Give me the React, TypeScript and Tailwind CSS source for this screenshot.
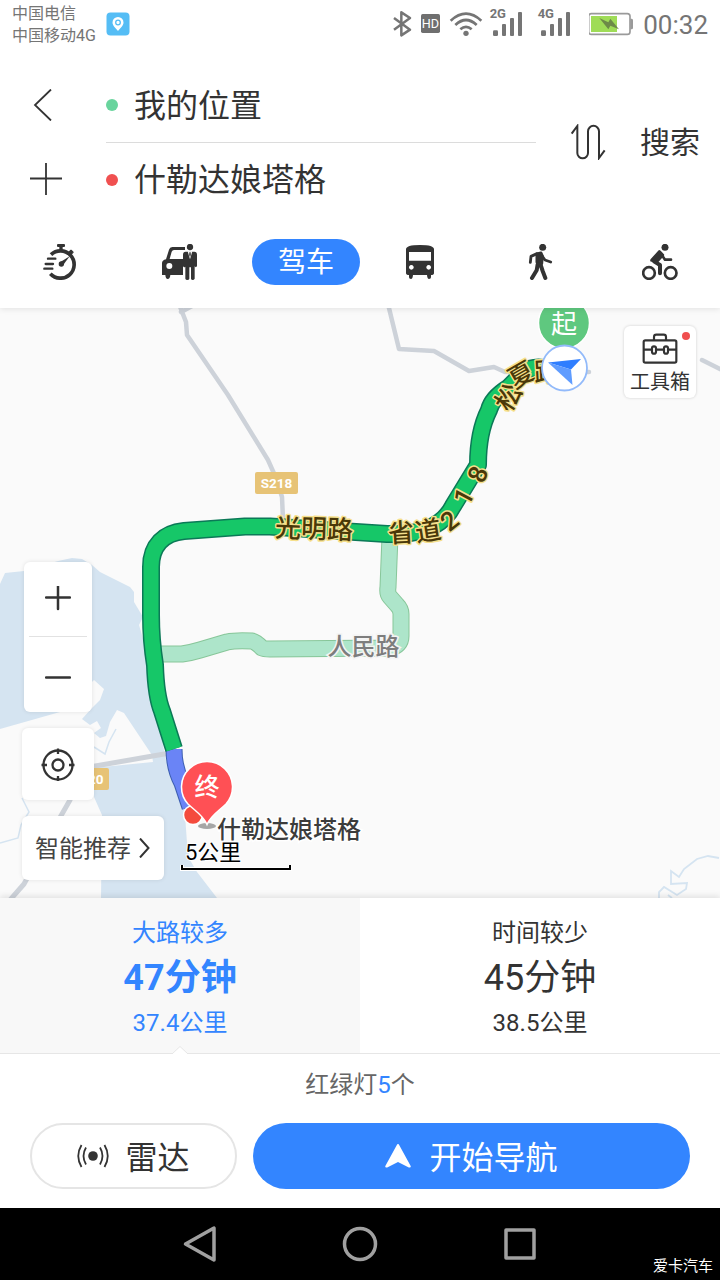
import { useState } from "react";
import type { ReactNode } from "react";

function StatusBar() {
  return (
    <div className="flex h-12 items-center justify-between px-3 text-[#757575]">
      <div className="flex items-center gap-[10px]">
        <div className="pt-0.5 text-[16px] leading-[22px]">
          <p>中国电信</p>
          <p>中国移动4G</p>
        </div>
        <svg className="size-6" viewBox="0 0 24 24" aria-hidden="true">
          <rect x="0.5" y="0.5" width="23" height="23" rx="4" fill="#55bdf5" />
          <path d="M12 5a5.5 5.5 0 0 0-5.5 5.5c0 3.400 3.500 5.500 5.500 8.500 2-3 5.500-5.100 5.500-8.500A5.500 5.500 0 0 0 12 5z" fill="#fff" />
          <circle cx="12" cy="10.500" r="2.300" fill="#fff" stroke="#55bdf5" strokeWidth="1.300" />
        </svg>
      </div>
      <div className="flex items-center gap-2">
        <svg className="h-[30px] w-5" viewBox="98 27 60 90" fill="none" stroke="#757575" strokeWidth="7.500" aria-hidden="true">
          <path d="M101 54L149 89L123 106V37L149 54L101 89" strokeLinejoin="round" />
        </svg>
        <svg className="h-[30px] w-5" viewBox="183 27 60 90" aria-hidden="true">
          <rect x="183" y="42" width="57" height="57" rx="5" fill="#6f6f6f" />
          <text x="211.500" y="83" textAnchor="middle" fontSize="38" fill="#fff">HD</text>
        </svg>
        <svg className="h-[30px] w-[34px]" viewBox="267 27 102 90" fill="none" stroke="#757575" strokeWidth="8" aria-hidden="true">
          <path d="M272 62Q318 20 364 62M286 75Q318 45 350 75M301 88Q318 73 335 88" />
          <circle cx="318" cy="100" r="8" fill="#757575" stroke="none" />
        </svg>
        <Signal label="2G" className="mr-2 h-8 w-8" />
        <Signal label="4G" className="mr-[10px] h-8 w-8" />
        <svg className="h-6 w-[46px]" viewBox="687 36 138 72" aria-hidden="true">
          <rect x="686" y="41" width="124" height="62" rx="8" fill="#fff" stroke="#9a9a9a" strokeWidth="5" />
          <path d="M811 56h4q4 0 4 5v22q0 5-4 5h-4z" fill="#9a9a9a" />
          <rect x="693" y="48" width="78" height="48" fill="#9fdc57" />
          <path d="M718 54L745 67L751 56L777 88L751 77L745 88z" fill="#6d8a48" />
        </svg>
        <time className="pt-0.5 text-[26px] leading-8">00:32</time>
      </div>
    </div>
  );
}

function Signal({ label, className }: { label: string; className: string }) {
  return (
    <svg className={className} viewBox="393 24 96 96" fill="#757575" overflow="visible" aria-hidden="true">
      <text x="389" y="53" fontSize="39" fontWeight="700">{label}</text>
      <rect x="399" y="91" width="15" height="17" rx="4" />
      <rect x="426" y="72" width="12" height="36" rx="3" />
      <rect x="450" y="54" width="12" height="54" rx="3" />
      <rect x="474" y="36" width="12" height="72" rx="3" />
    </svg>
  );
}

function SearchPanel() {
  return (
    <div className="flex pt-5">
      <div className="flex w-[106px] shrink-0 flex-col text-[#333]">
        <button type="button" aria-label="返回" className="flex h-[74px] items-center pl-[30px]">
          <svg className="size-8" viewBox="0 0 32 32" fill="none" stroke="currentColor" strokeWidth="1.800">
            <path d="M21 0.500L5 16L21 31.500" />
          </svg>
        </button>
        <button type="button" aria-label="添加途经点" className="flex h-[74px] items-center pl-[30px]">
          <svg className="size-8" viewBox="0 0 32 32" fill="none" stroke="currentColor" strokeWidth="1.800">
            <path d="M16 0V32M0 15.500H32" />
          </svg>
        </button>
      </div>
      <div className="min-w-0 flex-1 text-[#333]">
        <label className="flex h-[75px] items-center gap-4 border-b border-[#dcdcdc]">
          <span className="size-3 shrink-0 rounded-full bg-[#69d49d]" />
          <input aria-label="起点" defaultValue="我的位置" className="w-full min-w-0 bg-transparent pt-0.5 text-[32px] leading-[48px] outline-none" />
        </label>
        <label className="flex h-[73px] items-center gap-4">
          <span className="size-3 shrink-0 rounded-full bg-[#f05050]" />
          <input aria-label="终点" defaultValue="什勒达娘塔格" className="w-full min-w-0 bg-transparent text-[32px] leading-[48px] outline-none" />
        </label>
      </div>
      <div className="flex w-[184px] shrink-0 items-center justify-between pl-[34px] pr-5 text-[#333]">
        <button type="button" aria-label="交换起终点">
          <svg className="size-9" viewBox="630 372 108 108" fill="none" stroke="currentColor" strokeWidth="6">
            <path d="M635 401L652 378V459A15 15 0 0 0 684 459V394A16 16 0 0 1 717 394V474L734 451" />
          </svg>
        </button>
        <button type="button" className="pt-0.5 text-[30px] leading-[44px]">搜索</button>
      </div>
    </div>
  );
}

const icons: Record<string, ReactNode> = {
  打车: (
    <svg className="size-9" viewBox="126 57 108 108" fill="#333" aria-hidden="true">
      <rect x="171" y="57" width="24" height="9" rx="3" />
      <rect x="178" y="62" width="10" height="14" />
      <path d="M151 88A41 41 0 1 1 149 145" transform="translate(2 1)" fill="none" stroke="#333" strokeWidth="11" />
      <path d="M207 82L213 76L219 82L213 88z" stroke="#333" strokeWidth="4" strokeLinejoin="round" />
      <path d="M144 101H166M137 117H159M133 131H157" stroke="#333" strokeWidth="7" strokeLinecap="round" />
      <path d="M180 112L209 94L189 121z" />
      <circle cx="184" cy="117" r="8" />
    </svg>
  ),
  代驾: (
    <svg className="size-9" viewBox="486 57 108 108" fill="#333" aria-hidden="true">
      <path d="M498 103L507 74Q509 66 517 66H555V75H522Q517 75 515 80L509 102H549V150H511Q510 162 503 162Q497 162 496 150H486V114Q486 106 498 103z" />
      <circle cx="508" cy="123" r="9" fill="#fff" />
      <circle cx="570" cy="66" r="9.500" />
      <path d="M557 80H583Q591 80 591 89V124Q587 129 584 124V161Q582 165 578 165Q574 165 573 161V127H568V161Q567 165 562 165Q557 165 556 161V125Q553 129 549 124V89Q549 80 557 80z" />
      <path d="M563 79L570 103L577 79z" fill="#fff" />
      <path d="M568 82H572L572.500 90L570 96L567.500 90z" />
    </svg>
  ),
  公交: (
    <svg className="size-9" viewBox="126 57 108 108" aria-hidden="true">
      <path fillRule="evenodd" fill="#333" d="M138 73Q138 60 180 60Q222 60 222 73V144Q222 150 213 150V157Q213 162 207 162Q202 162 201 150H159Q158 162 153 162Q147 162 147 157V150Q138 150 138 144zM147 81V107H213V81zM154 120a7 7 0 1 0 .1 0zM206 120a7 7 0 1 0 .1 0z" />
    </svg>
  ),
  步行: (
    <svg className="size-9" viewBox="486 57 108 108" fill="none" stroke="#333" strokeLinecap="round" strokeLinejoin="round" aria-hidden="true">
      <circle cx="548" cy="67" r="10.500" fill="#333" stroke="none" />
      <path d="M531 87L543 84L547 93L545 116L535 119L531 111z" fill="#333" strokeWidth="9" />
      <path d="M531 86L513 94L511 112M547 94L555 105L572 111" strokeWidth="8.500" />
      <path d="M533 118L530 136L516 159M541 117L548 138L556 159" strokeWidth="12" />
    </svg>
  ),
  骑行: (
    <svg className="size-9" viewBox="846 57 108 108" fill="none" stroke="#333" strokeLinecap="round" strokeLinejoin="round" aria-hidden="true">
      <circle cx="915" cy="67" r="10.500" fill="#333" stroke="none" />
      <circle cx="867" cy="144" r="17.500" strokeWidth="8" />
      <circle cx="932" cy="144" r="17.500" strokeWidth="8" />
      <path d="M898 80L908 90L892 108L875 106z" fill="#333" strokeWidth="9" />
      <path d="M904 88L915 104H933" strokeWidth="8" />
      <path d="M882 109L900 120V145" strokeWidth="12" />
    </svg>
  ),
};

function TravelModes() {
  return (
    <nav className="grid h-[92px] grid-cols-6 items-center justify-items-center" aria-label="出行方式">
      {["打车", "代驾", "驾车", "公交", "步行", "骑行"].map((mode) =>
        mode === "驾车" ? (
          <button key={mode} type="button" aria-pressed="true" className="h-[46px] w-[108px] justify-self-end rounded-full bg-[#3385ff] pt-0.5 text-[28px] leading-[44px] text-white">
            驾车
          </button>
        ) : (
          <button key={mode} type="button" aria-label={mode}>
            {icons[mode]}
          </button>
        ),
      )}
    </nav>
  );
}

const roadLabels = [
  { text: "光明路", x: 314, y: 528, angle: 2 },
  { text: "省", x: 401, y: 532, angle: -3 },
  { text: "道", x: 428, y: 530, angle: -9 },
  { text: "2", x: 449, y: 520, angle: -38 },
  { text: "1", x: 463, y: 496, angle: -62 },
  { text: "8", x: 477, y: 474, angle: -68 },
  { text: "松", x: 508, y: 397, angle: -58 },
  { text: "夏", x: 521, y: 374, angle: -30 },
  { text: "路", x: 547, y: 371, angle: -3 },
];

const mainRoute =
  "M552 370Q535 364 524 372L508 388Q492 398 489 410Q478 432 478 465L453 506Q440 532 400 534H387L270 526.500H245L184 531C164 533 151 545 151 567V615Q151 640 155 665Q156 696 162 711L174 749";
const endRoute = "M174 749Q174 768 182 783L190 807";
const altRoute =
  "M160 654H182Q190 653 200 650L227 642Q236 640 252 641Q256 642 262 648Q264 649 270 649L390 648Q401 646 401 636V614Q401 609 397 605L390 597Q387 594 388 587L390 536";

function MapCanvas() {
  return (
    <svg className="absolute inset-0 size-full" viewBox="0 308 720 590" preserveAspectRatio="xMidYMid slice" role="img" aria-label="路线地图">
      <rect y="308" width="720" height="590" fill="#fafafa" />
      <path
        fill="#d5e4f1"
        d="M0 584L5 573L24 571L58 561L72 558L82 559L92 565L100 572L130 587L134 592V602L143 617L139 625L145 645L150 690L160 730L166 760L184 800L187 843L190 860L197 872L217 898H101L102 815L94 797L92 768L153 762L152 755L124 713L117 710L110 722L106 736L100 738L94 733L101 728L97 721L90 725L82 719L92 708L100 700L104 689L94 680L60 712L0 729z"
      />
      <path d="M94 747L105 754L109 742L116 729M22 798L29 812L21 825L18 838L0 843" fill="none" stroke="#d5e4f1" strokeWidth="1.500" />
      <path d="M719 858L708 856L697 859L684 869L679 877L671 871V884L687 883L686 889L677 895L664 887L659 892V898M668 895L672 898" fill="none" stroke="#d5e4f1" strokeWidth="1.800" />
      <g fill="none" stroke="#cdd2d9" strokeWidth="4.500" strokeLinejoin="round" strokeLinecap="round">
        <path d="M179 304L186 322L187 335L228 395L268 460L276 478L282 497L283 520" />
        <path d="M181 312L194 305" />
        <path d="M388 304L399 349L434 351L469 371L494 367L505 372H589M702 360L724 371" />
        <path d="M78 769L170 753M70 800L58 821L24 884L10 900" strokeWidth="5" />
      </g>
      <path d={altRoute} fill="none" stroke="#87c699" strokeWidth="17" strokeLinejoin="round" />
      <path d={altRoute} fill="none" stroke="#ade5ca" strokeWidth="15" strokeLinejoin="round" />
      <path d={endRoute} fill="none" stroke="#3c5eb0" strokeWidth="17" />
      <path d={endRoute} fill="none" stroke="#6a84f6" strokeWidth="15" />
      <path d={mainRoute} fill="none" stroke="#0b7957" strokeWidth="18" strokeLinejoin="round" />
      <path d={mainRoute} fill="none" stroke="#16c768" strokeWidth="15" strokeLinejoin="round" />

      <rect x="255" y="472" width="43" height="22" rx="2" fill="#e7c376" />
      <text x="276.500" y="487.500" textAnchor="middle" fontSize="13.500" fontWeight="700" fill="#fff">S218</text>
      <rect x="66" y="768" width="43" height="22" rx="2" fill="#e7c376" />
      <text x="103.500" y="783.500" textAnchor="end" fontSize="13.500" fontWeight="700" fill="#fff">S220</text>

      <g fontSize="26" fontWeight="500" fill="#4a3808" stroke="#f6e08c" strokeWidth="3" paintOrder="stroke" strokeLinejoin="round" textAnchor="middle">
        {roadLabels.map((label) => (
          <text key={label.text} transform={`translate(${label.x} ${label.y}) rotate(${label.angle})`} y="10">
            {label.text}
          </text>
        ))}
      </g>
      <text x="363.500" y="655" textAnchor="middle" fontSize="24" fontWeight="500" fill="#7d7d7d" stroke="#f4f4f4" strokeWidth="3" paintOrder="stroke">人民路</text>
      <text x="217" y="838" fontSize="24" fontWeight="500" fill="#3c3c3c" stroke="#fff" strokeWidth="3" paintOrder="stroke">什勒达娘塔格</text>

      <circle cx="564" cy="323" r="25.500" fill="#5fc87f" stroke="#fff" strokeWidth="1.500" />
      <text x="564" y="333" textAnchor="middle" fontSize="26" fill="#fff">起</text>
      <circle cx="564.500" cy="368" r="22.500" fill="#fff" stroke="#92bafa" strokeWidth="1.800" />
      <path d="M548 362.500L581 359L571 369.500z" fill="#2f7eff" />
      <path d="M548 362.500L571 369.500L572.500 385z" fill="#5f9cff" />

      <ellipse cx="207" cy="826" rx="9" ry="3" fill="#a6a6a6" />
      <circle cx="193" cy="815" r="9.500" fill="#f44b3d" stroke="#fff" strokeWidth="1.500" />
      <path d="M207 824.500C203 815 195 811 188 804A25.500 25.500 0 1 1 226 804C219 811 211 815 207 824.500z" fill="#ff5055" stroke="#fff" strokeWidth="1.500" />
      <text x="207" y="795.500" textAnchor="middle" fontSize="25" fontWeight="500" fill="#fff">终</text>

      <text x="185" y="860" fontSize="22" fill="#000" stroke="#fff" strokeWidth="2" paintOrder="stroke">5公里</text>
      <path d="M182 865V869H290V865" fill="none" stroke="#fff" strokeWidth="4" />
      <path d="M182 865V869H290V865" fill="none" stroke="#000" strokeWidth="2" />
    </svg>
  );
}

function MapArea() {
  return (
    <main className="relative min-h-[590px] flex-1 overflow-hidden text-[#333]">
      <MapCanvas />
      <button type="button" className="absolute right-6 top-[18px] flex size-[72px] flex-col items-center rounded-md bg-white pt-[7px] shadow-[0_0_3px_rgba(0,0,0,0.18)]">
        <svg className="h-8 w-9" viewBox="846 97 108 96" fill="none" stroke="#333" strokeWidth="6.500" aria-hidden="true">
          <rect x="851" y="119" width="98" height="67" rx="5" />
          <path d="M882 119V109Q882 102 889 102H911Q918 102 918 109V119M851 147H875M889 147H911M925 147H949" />
          <rect x="876" y="137" width="12" height="22" rx="6" />
          <rect x="912" y="137" width="12" height="22" rx="6" />
        </svg>
        <span className="pt-px text-[20px] leading-8">工具箱</span>
        <span className="absolute right-[6px] top-[6px] size-2 rounded-full bg-[#f04f4f]" />
      </button>

      <div className="absolute bottom-[18px] left-[22px] flex flex-col items-start gap-4">
        <div className="ml-0.5 flex w-[68px] flex-col rounded-md bg-white shadow-[0_0_4px_rgba(0,0,0,0.1)]">
          <button type="button" aria-label="放大" className="flex h-[74px] items-center justify-center">
            <svg className="size-[26px]" viewBox="0 0 26 26" stroke="#333" strokeWidth="2.500" strokeLinecap="round">
              <path d="M13 0V23M1 11.500H25" />
            </svg>
          </button>
          <div className="mx-[5px] h-px bg-[#e2e2e2]" />
          <button type="button" aria-label="缩小" className="flex h-[75px] items-center justify-center">
            <svg className="size-[26px]" viewBox="0 0 26 26" stroke="#333" strokeWidth="2.500" strokeLinecap="round">
              <path d="M1 15.500H25" />
            </svg>
          </button>
        </div>
        <button type="button" aria-label="定位" className="flex size-[72px] items-center justify-center rounded-md bg-white shadow-[0_0_4px_rgba(0,0,0,0.1)]">
          <svg className="size-[34px]" viewBox="0 -1 34 34" fill="none" stroke="#333" strokeWidth="2.300">
            <circle cx="17" cy="17" r="14.500" />
            <circle cx="17" cy="17" r="5.500" />
            <path d="M17 0.500V6M17 28V33.500M0.500 17H6M28 17H33.500" />
          </svg>
        </button>
        <button type="button" className="flex h-16 w-[142px] items-center gap-[7px] rounded-md bg-white pl-[13px] text-[24px] leading-9 text-[#444] shadow-[0_0_4px_rgba(0,0,0,0.1)]">
          <span className="pt-0.5">智能推荐</span>
          <svg className="h-5 w-3" viewBox="0 0 12 20" fill="none" stroke="#333" strokeWidth="2" aria-hidden="true">
            <path d="M2 0.500L10.500 10L2 19.500" />
          </svg>
        </button>
      </div>
    </main>
  );
}

const routes = [
  { name: "大路较多", time: "47分钟", distance: "37.4公里" },
  { name: "时间较少", time: "45分钟", distance: "38.5公里" },
];

function RoutePanel() {
  const [selected, setSelected] = useState(0);
  return (
    <section className="relative z-10 bg-white shadow-[0_-2px_6px_rgba(0,0,0,0.1)]">
      <div className="grid grid-cols-2 border-b border-[#e6e6e6]">
        {routes.map((route, index) => {
          const active = index === selected;
          return (
            <button
              key={route.name}
              type="button"
              aria-pressed={active}
              onClick={() => setSelected(index)}
              className={
                active
                  ? "relative flex h-[155px] flex-col items-center bg-[#f8f8f8] pt-[17px] text-[#3385ff]"
                  : "relative flex h-[155px] flex-col items-center bg-white pt-[17px] text-[#333]"
              }
            >
              <span className="text-[24px] leading-9">{route.name}</span>
              <span className={active ? "text-[36px] font-bold leading-[54px]" : "text-[36px] leading-[54px]"}>{route.time}</span>
              <span className="text-[24px] leading-9">{route.distance}</span>
              {active && (
                <svg className="absolute -bottom-px left-1/2 h-2 w-4 -translate-x-1/2" viewBox="0 0 16 8" aria-hidden="true">
                  <path d="M0 8L8 0.500L16 8" fill="#fff" stroke="#e6e6e6" />
                </svg>
              )}
            </button>
          );
        })}
      </div>
      <p className="pt-[13px] text-center text-[24px] leading-9 text-[#666]">
        红绿灯<span className="text-[#3385ff]">5</span>个
      </p>
      <div className="flex gap-4 px-[30px] pb-[19px] pt-5">
        <button type="button" className="flex h-[66px] w-[207px] items-center justify-center gap-4 rounded-full border-2 border-[#e5e5e5] text-[32px] leading-[48px] text-[#333]">
          <svg className="h-[26px] w-8" viewBox="0 0 32 26" fill="none" stroke="#333" strokeWidth="1.800" aria-hidden="true">
            <circle cx="16" cy="13" r="4.800" fill="#333" stroke="none" />
            <path d="M9 4.500Q4 13 9 21.500M23 4.500Q28 13 23 21.500M4.500 2Q-2 13 4.500 24M27.500 2Q34 13 27.500 24" />
          </svg>
          <span className="pt-[3px]">雷达</span>
        </button>
        <button type="button" className="flex h-[66px] flex-1 items-center justify-center gap-[18px] rounded-full bg-[#3385ff] text-[32px] leading-[48px] text-white">
          <svg className="h-6 w-[26px]" viewBox="0 0 26 24" fill="#fff" aria-hidden="true">
            <path d="M13 0Q13.800 0 14.300 1.300L25.800 22.300Q25.800 24 23.800 23.400L13 18L2.200 23.400Q0.200 24 0.200 22.300L11.700 1.300Q12.200 0 13 0z" />
          </svg>
          <span className="pt-[3px]">开始导航</span>
        </button>
      </div>
    </section>
  );
}

function SystemNav() {
  return (
    <footer className="relative z-10 flex h-[72px] justify-center bg-black">
      <button type="button" aria-label="系统返回" className="flex w-40 items-center justify-center">
        <svg className="size-10" viewBox="0 0 40 40" fill="none" stroke="#a0a0a0" strokeWidth="3.500" strokeLinejoin="round">
          <path d="M34 4V36L5.500 20z" />
        </svg>
      </button>
      <button type="button" aria-label="主屏幕" className="flex w-40 items-center justify-center">
        <svg className="size-10" viewBox="0 0 40 40" fill="none" stroke="#a0a0a0" strokeWidth="3.500">
          <circle cx="20" cy="20" r="15.500" />
        </svg>
      </button>
      <button type="button" aria-label="最近任务" className="flex w-40 items-center justify-center">
        <svg className="size-10" viewBox="0 0 40 40" fill="none" stroke="#a0a0a0" strokeWidth="3.500" strokeLinejoin="round">
          <rect x="6" y="6" width="28" height="28" />
        </svg>
      </button>
      <span className="absolute bottom-[3px] right-[7px] text-[15px] leading-[22px] text-white">爱卡汽车</span>
    </footer>
  );
}

export default function App() {
  return (
    <div lang="zh-CN" className="flex min-h-screen flex-col bg-white font-[Roboto,'Noto_Sans_CJK_SC',sans-serif]">
      <header className="relative z-10 bg-white shadow-[0_1px_6px_rgba(0,0,0,0.1)]">
        <StatusBar />
        <SearchPanel />
        <TravelModes />
      </header>
      <MapArea />
      <RoutePanel />
      <SystemNav />
    </div>
  );
}
